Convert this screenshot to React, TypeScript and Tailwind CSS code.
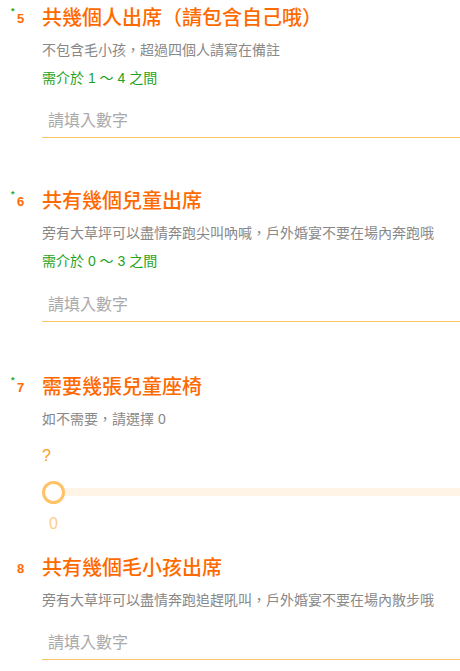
import React from 'react'

const font = { fontFamily: '"Liberation Sans", "Noto Sans CJK TC", sans-serif' }

type QuestionProps = {
  num: string
  required?: boolean
  title: string
  desc: string
  className?: string
  children?: React.ReactNode
}

const Question: React.FC<QuestionProps> = ({ num, required, title, desc, className, children }) => {
  return (
    <div className={`flex ${className || ''}`}>
      {/* Number column */}
      <div className="w-[42px] shrink-0 pl-[17px] pt-[2px]">
        <span className="relative text-[13px] leading-4 font-bold text-[#ff6a00]">
          {required && (
            <span className="absolute -left-[6px] -top-[4px] text-[9px] leading-none font-bold text-[#22aa22]">*</span>
          )}
          {num}
        </span>
      </div>

      {/* Content */}
      <div className="flex-1 flex flex-col">
        <h2 className="text-[20px] leading-7 font-medium text-[#ff6a00]">{title}</h2>
        <p className="mt-2 text-[14px] leading-5 text-[#888888]">{desc}</p>
        {children}
      </div>
    </div>
  )
}

const NumberInput: React.FC<{ className?: string }> = ({ className }) => (
  <input
    type="text"
    placeholder="請填入數字"
    className={`h-[34px] w-full pl-[6px] text-[16px] border-0 border-b border-solid border-[#fbc36b] outline-none placeholder:text-[#aaaaaa] ${className || ''}`}
    style={font}
  />
)

const App: React.FC = () => {
  return (
    <div className="w-[460px] min-h-[671px] bg-white overflow-hidden" style={font}>
      <div className="flex flex-col">
        {/* Q5 */}
        <Question
          className="pt-[4px]"
          num="5"
          required
          title="共幾個人出席（請包含自己哦）"
          desc="不包含毛小孩，超過四個人請寫在備註"
        >
          <p className="mt-2 text-[14px] leading-5 text-[#1fa31f]">需介於 1 ～ 4 之間</p>
          <NumberInput className="mt-4" />
        </Question>

        {/* Q6 */}
        <Question
          className="mt-[49px]"
          num="6"
          required
          title="共有幾個兒童出席"
          desc="旁有大草坪可以盡情奔跑尖叫吶喊，戶外婚宴不要在場內奔跑哦"
        >
          <p className="mt-2 text-[14px] leading-5 text-[#1fa31f]">需介於 0 ～ 3 之間</p>
          <NumberInput className="mt-[17px]" />
        </Question>

        {/* Q7 */}
        <Question
          className="mt-[51px]"
          num="7"
          required
          title="需要幾張兒童座椅"
          desc="如不需要，請選擇 0"
        >
          <p className="mt-[17px] text-[16px] leading-5 text-[#ff9a1a]">?</p>
          <div className="relative mt-[14px] h-[24px] flex items-center">
            <div className="absolute left-[12px] right-0 top-1/2 -translate-y-1/2 h-[8px] bg-[#fff4e6]" />
            <div className="relative w-[23px] h-[23px] rounded-full border-[3px] border-[#ffc266] bg-white" />
          </div>
          <div className="mt-[10px] w-[23px] text-center text-[16px] leading-5 text-[#ffcc8a]">0</div>
        </Question>

        {/* Q8 */}
        <Question
          className="mt-[20px]"
          num="8"
          title="共有幾個毛小孩出席"
          desc="旁有大草坪可以盡情奔跑追趕吼叫，戶外婚宴不要在場內散步哦"
        >
          <NumberInput className="mt-4" />
        </Question>
      </div>
    </div>
  )
}

export default App
